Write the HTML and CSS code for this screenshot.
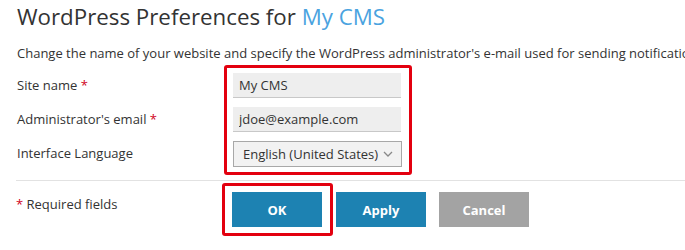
FILE: index.html
```html
<!DOCTYPE html>
<html>
<head>
<meta charset="utf-8">
<link rel="stylesheet" href="styles.css">
</head>
<body>
<div class="page">
  <h1 class="title">WordPress Preferences for <span class="accent">My CMS</span></h1>
  <p class="desc">Change the name of your website and specify the WordPress administrator's e-mail used for sending notifications.</p>
  <div class="form">
    <div class="labels">
      <div class="label">Site name <span class="req">*</span></div>
      <div class="label">Administrator's email <span class="req">*</span></div>
      <div class="label">Interface Language</div>
    </div>
    <div class="fields hl">
      <div class="field"><input class="input" type="text" value="My CMS"></div>
      <div class="field"><input class="input" type="text" value="jdoe@example.com"></div>
      <div class="field">
        <div class="select">
          <span class="select-text">English (United States)</span>
          <svg class="chev" width="10" height="6" viewBox="0 0 10 6"><path d="M1 1l4 4 4-4" fill="none" stroke="#888" stroke-width="1.3"/></svg>
        </div>
      </div>
    </div>
  </div>
  <div class="divider"></div>
  <div class="footer">
    <div class="note"><span class="req">*</span> Required fields</div>
    <div class="buttons">
      <div class="hl hl-btn"><button class="btn btn-primary">OK</button></div>
      <button class="btn btn-primary">Apply</button>
      <button class="btn btn-muted">Cancel</button>
    </div>
  </div>
</div>
</body>
</html>
```
FILE: styles.css
```css
html, body {
  margin: 0;
  padding: 0;
  background: #fff;
}
body {
  font-family: "Open Sans", "Liberation Sans", sans-serif;
  color: #333;
  width: 685px;
  height: 250px;
  overflow: hidden;
}
.page {
  padding: 0 0 0 16px;
}
.title {
  margin: 0;
  padding-top: 2px;
  font-size: 22.3px;
  font-weight: 400;
  line-height: 30px;
  color: #333;
  padding-left: 1px;
  white-space: nowrap;
}
.accent {
  color: #4aa3df;
}
.desc {
  margin: 12px 0 0 1px;
  font-size: 13px;
  line-height: 18px;
  white-space: nowrap;
  overflow: hidden;
}
.form {
  display: flex;
  margin-top: 3px;
}
.labels {
  width: 207px;
  padding-top: 7px;
  padding-left: 1px;
}
.label {
  height: 34px;
  line-height: 26px;
  font-size: 13px;
}
.req {
  color: #d0021b;
}
.hl {
  border: 3px solid #e3000f;
  border-radius: 3px;
}
.fields {
  padding: 5px 7px 5px 6px;
  display: flex;
  flex-direction: column;
  gap: 9px;
}
.input {
  box-sizing: border-box;
  display: block;
  width: 168px;
  height: 25px;
  margin: 0;
  border: 0;
  border-bottom: 1px solid #c8c8c8;
  background: #eeeeee;
  font-family: "Open Sans", "Liberation Sans", sans-serif;
  font-size: 13px;
  color: #333;
  padding: 0 6px;
  outline: none;
}
.select {
  box-sizing: border-box;
  width: 169px;
  height: 26px;
  border: 1px solid #a8a8a8;
  background: #f2f2f2;
  display: flex;
  align-items: center;
  justify-content: space-between;
  padding: 0 8px 0 9px;
  font-size: 13px;
}
.divider {
  height: 1px;
  background: #e2e2e2;
  margin-top: 5px;
}
.footer {
  display: flex;
  align-items: flex-start;
}
.note {
  width: 206px;
  font-size: 13px;
  padding-top: 14px;
  line-height: 18px;
}
.buttons {
  display: flex;
  align-items: center;
  gap: 13px;
  margin-top: 2px;
}
.hl-btn {
  padding: 6px 8px 6px 7px;
  margin-right: -10px;
}
.btn {
  width: 90px;
  height: 35px;
  border: 0;
  margin: 0;
  display: block;
  font-family: "Open Sans", "Liberation Sans", sans-serif;
  font-size: 13px;
  font-weight: 700;
  color: #fff;
  padding: 0;
}
.btn-primary {
  background: #1d82b2;
}
.btn-muted {
  background: #a3a3a3;
}
```
